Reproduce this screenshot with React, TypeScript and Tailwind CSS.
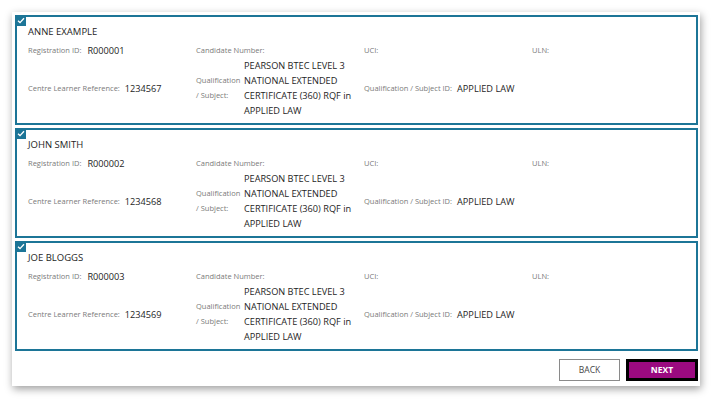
import React from "react";

const people = [
  { name: "ANNE EXAMPLE", reg: "R000001", ref: "1234567" },
  { name: "JOHN SMITH", reg: "R000002", ref: "1234568" },
  { name: "JOE BLOGGS", reg: "R000003", ref: "1234569" },
];

function Label({ children }: { children: React.ReactNode }) {
  return <span className="text-[7.5px] text-[#7a7a7a] leading-[15px] whitespace-nowrap">{children}</span>;
}
function Value({ children }: { children: React.ReactNode }) {
  return <span className="text-[9.2px] font-medium text-[#1e1e1e] leading-[15px] whitespace-nowrap">{children}</span>;
}

function Card({ p }: { p: (typeof people)[number] }) {
  return (
    <div className="relative border-2 border-[#1c7597] bg-white pl-[11px] pt-[8px] pb-[5px] h-[110px] text-[9.5px] leading-[14px]">
      <div className="absolute -left-[2px] -top-[2px] w-[11px] h-[11px] bg-[#1c7597] flex items-center justify-center">
        <svg width="8" height="7" viewBox="0 0 8 7">
          <path d="M1 3.8 L3 5.6 L7 1.2" fill="none" stroke="white" strokeWidth="1.3" />
        </svg>
      </div>
      <div className="text-[9.5px] leading-[14px] text-[#1e1e1e]">{p.name}</div>
      <div className="grid grid-cols-[repeat(4,168px)] mt-[4px] h-[14px] items-center">
        <div className="flex items-center gap-[6px] h-[14px]">
          <Label>Registration ID:</Label>
          <Value>{p.reg}</Value>
        </div>
        <div className="flex items-center h-[14px]"><Label>Candidate Number:</Label></div>
        <div className="flex items-center h-[14px]"><Label>UCI:</Label></div>
        <div className="flex items-center h-[14px]"><Label>ULN:</Label></div>
      </div>
      <div className="grid grid-cols-[repeat(4,168px)] mt-[1px] h-[60px] items-center">
        <div className="flex items-center gap-[5px]">
          <Label>Centre Learner Reference:</Label>
          <Value>{p.ref}</Value>
        </div>
        <div className="flex items-center gap-[3px]">
          <div className="w-[45px] flex flex-col">
            <Label>Qualification</Label>
            <Label>/ Subject:</Label>
          </div>
          <div className="w-[118px] flex flex-col text-[9.2px] font-medium text-[#1e1e1e] leading-[15px] whitespace-nowrap">
            <span>PEARSON BTEC LEVEL 3</span>
            <span>NATIONAL EXTENDED</span>
            <span>CERTIFICATE (360) RQF in</span>
            <span>APPLIED LAW</span>
          </div>
        </div>
        <div className="flex items-center gap-[5px]">
          <Label>Qualification / Subject ID:</Label>
          <Value>APPLIED LAW</Value>
        </div>
        <div />
      </div>
    </div>
  );
}

export default function App() {
  return (
    <div className="w-[719px] h-[405px] bg-white pt-[12px] pl-[12px]" style={{ fontFamily: '"Open Sans", "Noto Sans", sans-serif' }}>
      <div className="w-[688px] h-[374px] bg-white shadow-[1px_3px_8px_rgba(0,0,0,0.38)] pt-[3px] px-[3px]">
        <div className="flex flex-col gap-[3px] w-[683px]">
          {people.map((p) => (
            <Card key={p.reg} p={p} />
          ))}
        </div>
        <div className="flex justify-end gap-[6px] mt-[8px] w-[683px]">
          <button className="w-[61px] h-[22px] border border-[#8a8a8a] bg-white text-[8.5px] text-[#444]">BACK</button>
          <button className="w-[72px] h-[22px] border-[3px] border-black bg-[#9b0a80] text-[8.5px] font-bold text-white">NEXT</button>
        </div>
      </div>
    </div>
  );
}
